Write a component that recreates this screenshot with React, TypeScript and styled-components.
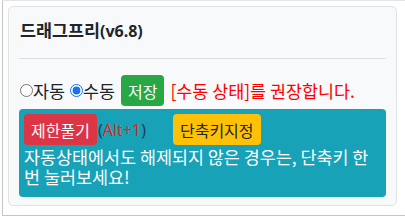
import React from "react";
import styled, { createGlobalStyle } from "styled-components";

const Global = createGlobalStyle`
  html, body { margin: 0; padding: 0; background: #ffffff; }
  body {
    font-family: "Noto Sans CJK KR", "Noto Sans", sans-serif;
    font-size: 17.4px;
    color: #212529;
  }
`;

const Frame = styled.div`
  margin-left: 2px;
  width: 398px;
  height: 209px;
  border: 1px solid #c6c6c6;
  border-top-color: #e4e4e4;
  box-shadow: 1px 1px 2px rgba(0, 0, 0, 0.08);
  padding: 5px 3px 0 5px;
  box-sizing: content-box;
  background: #ffffff;
`;

const Card = styled.div`
  background: #f8f9fa;
  border: 1px solid #dfe2e6;
  border-radius: 5px;
  padding: 11px 10px 8px 10px;
  width: 389px;
  box-sizing: border-box;
`;

const Title = styled.div`
  font-weight: 700;
  line-height: 24px;
  padding-left: 1px;
  color: #212529;
`;

const Latin = styled.span`
  font-family: "Noto Sans", sans-serif;
  font-size: 16px;
`;

const Divider = styled.hr`
  margin: 15px 0 0 0;
  border: 0;
  border-top: 1px solid #dcdfe3;
`;

const RadioRow = styled.div`
  display: flex;
  align-items: center;
  margin-top: 16px;
  height: 31px;
  line-height: 20px;
`;

const Radio = styled.input<{ $first?: boolean }>`
  width: 13px;
  height: 13px;
  margin: 0 0 0 ${(p) => (p.$first ? "1px" : "5px")};
  accent-color: #1a73e8;
`;

const Btn = styled.button<{ $bg: string; $fg: string; $ml?: number }>`
  background: ${(p) => p.$bg};
  color: ${(p) => p.$fg};
  border: 0;
  border-radius: 4px;
  height: 31px;
  padding: 0 7px;
  margin-left: ${(p) => p.$ml ?? 0}px;
  font-family: inherit;
  font-size: 16px;
  line-height: 20px;
  cursor: pointer;
`;

const Notice = styled.span`
  color: #ff0000;
  margin-left: 6px;
`;

const InfoBox = styled.div`
  margin-top: 3px;
  background: #17a2b8;
  border-radius: 4px;
  padding: 5px 5px 10px 5px;
`;

const BtnRow = styled.div`
  display: flex;
  align-items: center;
  height: 31px;
`;

const Hotkey = styled(Latin)`
  color: #1d3b5a;
  margin-left: 1px;
`;

const Red = styled.span`
  color: #ff1a1a;
`;

const InfoText = styled.div`
  color: #ffffff;
  margin-top: 2px;
  line-height: 20px;
`;

export default function App() {
  return (
    <>
      <Global />
      <Frame>
        <Card>
          <Title>
            드래그프리<Latin>(v6.8)</Latin>
          </Title>
          <Divider />
          <RadioRow>
            <Radio type="radio" name="mode" $first />
            <span>자동</span>
            <Radio type="radio" name="mode" defaultChecked />
            <span>수동</span>
            <Btn $bg="#28a745" $fg="#ffffff" $ml={6}>
              저장
            </Btn>
            <Notice>[수동 상태]를 권장합니다.</Notice>
          </RadioRow>
          <InfoBox>
            <BtnRow>
              <Btn $bg="#dc3545" $fg="#ffffff">
                제한풀기
              </Btn>
              <Hotkey>
                (<Red>Alt+1</Red>)
              </Hotkey>
              <Btn $bg="#ffc107" $fg="#212529" $ml={27}>
                단축키지정
              </Btn>
            </BtnRow>
            <InfoText>
              자동상태에서도 해제되지 않은 경우는, 단축키 한 번 눌러보세요!
            </InfoText>
          </InfoBox>
        </Card>
      </Frame>
    </>
  );
}
